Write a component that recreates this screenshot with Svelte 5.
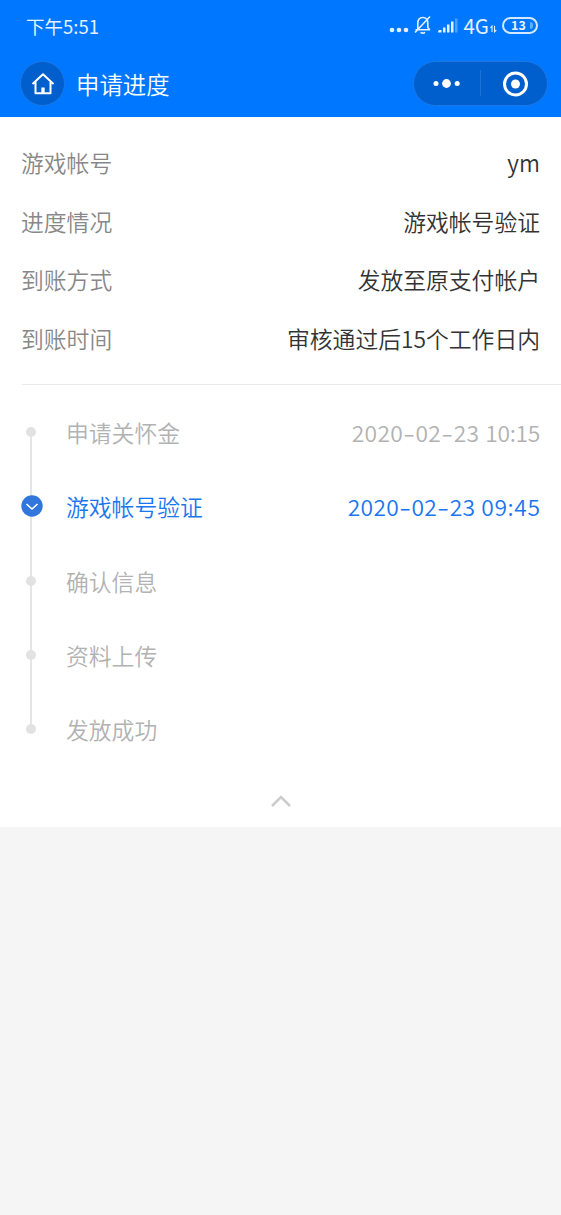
<script>
    const details = [
        { label: '游戏帐号', value: 'ym' },
        { label: '进度情况', value: '游戏帐号验证' },
        { label: '到账方式', value: '发放至原支付帐户' },
        { label: '到账时间', value: '审核通过后15个工作日内' }
    ];

    const steps = [
        { name: '申请关怀金', date: '2020-02-23', time: '10:15' },
        { name: '游戏帐号验证', date: '2020-02-23', time: '09:45', current: true },
        { name: '确认信息' },
        { name: '资料上传' },
        { name: '发放成功' }
    ];
</script>

<header>
    <div class="status">
        <span class="clock">下午5:51</span>
        <svg class="signals" width="82" height="30" viewBox="0 0 82 30">
            <g fill="#e6f1ff">
                <circle cx="3" cy="20" r="2.3" />
                <circle cx="10" cy="20" r="2.3" />
                <circle cx="17" cy="20" r="2.3" />
                <path d="M50 20h2.5v2.5h-3.5v-1zM54 17.500h2.500v5h-2.500zM58 14.500h2.500v8h-2.500zM62 11.500h2.500v11h-2.500z" />
                <path opacity=".35" d="M66 8.500h2.500v14h-2.500z" />
            </g>
            <g fill="none" stroke="#e6f1ff" stroke-width="1.6">
                <path d="M26.500 19.800h14.500M28.800 19V13.500c0-4 2-6 5-6s5 2 5 6v4l2 2.300M26 22.500L41 6.500M31.500 22.300q2.300 1.700 4.600 0" />
            </g>
        </svg>
        <span class="network">4G</span>
        <svg class="data" width="7" height="8" viewBox="0 0 7 8">
            <path d="M2 7V1L.5 3M4.500 .8v6L6.300 5" fill="none" stroke="#e6f1ff" stroke-width="1.1" />
        </svg>
        <span class="battery">13<i></i></span>
    </div>
    <div class="bar">
        <span class="home">
            <svg width="24" height="24" viewBox="0 0 24 24">
                <path d="M1.500 12L12 2.300 22.500 12M4.500 10v11.200h15V10M12 21v-5" fill="none" stroke="#fff" stroke-width="2" stroke-linejoin="round" />
                <path d="M10.300 15.500h3.400v5h-3.400z" fill="#fff" />
            </svg>
        </span>
        <h1>申请进度</h1>
        <div class="capsule">
            <svg width="133" height="43" viewBox="0 0 133 43">
                <g fill="#fff">
                    <circle cx="22" cy="21.5" r="2.5" />
                    <circle cx="32.5" cy="21.5" r="4.4" />
                    <circle cx="43.2" cy="21.5" r="2.5" />
                    <circle cx="101.5" cy="22" r="4.5" />
                </g>
                <circle cx="101.5" cy="22" r="11" fill="none" stroke="#fff" stroke-width="3" />
                <path d="M66.500 8v26" stroke="#1b72dc" />
            </svg>
        </div>
    </div>
</header>

<main>
    <dl>
        {#each details as item}
            <div class="row">
                <dt>{item.label}</dt>
                <dd>{item.value}</dd>
            </div>
        {/each}
    </dl>

    <ul>
        {#each steps as step}
            <li class:current={step.current}>
                <span class="mark">
                    {#if step.current}
                        <svg width="22" height="22" viewBox="0 0 22 22">
                            <circle cx="11" cy="11" r="10.7" fill="#3076dc" />
                            <path d="M5.500 9l5.500 5 5.500-5" fill="none" stroke="#fff" stroke-width="1.6" />
                        </svg>
                    {:else}
                        <i class="dot"></i>
                    {/if}
                </span>
                <span class="name">{step.name}</span>
                {#if step.date}
                    <span class="date">
                        {#each step.date.split('-') as part, i}{#if i > 0}<span class="dash">-</span>{/if}{part}{/each}
                    </span>
                    <span class="time">{step.time}</span>
                {/if}
            </li>
        {/each}
    </ul>

    <div class="fold">
        <svg width="22" height="14" viewBox="0 0 22 14">
            <path d="M2 12l9-9 9 9" fill="none" stroke="#ccc" stroke-width="2.6" />
        </svg>
    </div>
</main>

<style>
    :global(body) {
        background: #f5f5f5;
        font-family: "Noto Sans CJK SC", sans-serif;
        font-weight: 350;
        font-size: 22.8px;
    }

    header {
        height: 117px;
        background: #0077ff;
        color: #e6f1ff;
    }

    .status {
        display: flex;
        align-items: center;
        height: 50px;
        padding: 0 23px 0 26px;
        line-height: 50px;
    }

    .clock {
        margin: 1px auto 0 0;
        font-size: 18.5px;
        font-weight: 400;
    }

    .signals {
        margin: 0 -8px 1px 0;
    }

    .network {
        font-size: 20.5px;
        font-weight: 400;
    }

    .data {
        margin: 7px 5px 0 1px;
    }

    .battery {
        display: flex;
        align-items: center;
        justify-content: center;
        box-sizing: border-box;
        width: 36px;
        height: 17px;
        border: 2px solid #d5e8ff;
        border-radius: 9px;
        font-size: 12.5px;
        font-weight: 700;
        line-height: 12px;
    }

    .battery i {
        width: 3px;
        height: 7px;
        margin: 0 -4px 0 4px;
        border-radius: 0 3px 3px 0;
        background: #66adff;
    }

    .bar {
        display: flex;
        align-items: center;
        height: 67px;
        padding: 0 13px 0 20px;
    }

    .home {
        display: flex;
        align-items: center;
        justify-content: center;
        box-sizing: border-box;
        width: 45px;
        height: 45px;
        border: 1px solid #1b78e5;
        border-radius: 50%;
        background: #005fcc;
    }

    h1 {
        margin: 1px auto 0 11px;
        color: #fff;
        font-size: 23.4px;
        font-weight: 350;
        line-height: 45px;
    }

    .capsule {
        display: flex;
        border: 1px solid #1b78e5;
        border-radius: 23px;
        background: #005fcc;
    }

    main {
        height: 709.5px;
        background: #fff;
    }

    dl {
        margin: 0 0 0 22px;
        padding: 17px 21px 16px 0;
        border-bottom: 1.5px solid #eaeaea;
    }

    .row {
        display: flex;
        justify-content: space-between;
        height: 58.5px;
        line-height: 58.5px;
    }

    dt {
        margin-left: -1px;
        color: #888;
    }

    dd {
        margin: 0;
        color: #333;
    }

    ul {
        margin: 0;
        padding: 11px 21px 0 22px;
        list-style: none;
    }

    li {
        display: flex;
        height: 74.3px;
        color: #b2b2b2;
        line-height: 74.3px;
    }

    .mark {
        display: flex;
        flex-direction: column;
        align-items: center;
        justify-content: center;
        width: 18px;
        margin: -1px 26px 1px 0;
        background: linear-gradient(#e5e5e5, #e5e5e5) 8px 0 / 2px 100% no-repeat;
    }

    .mark svg {
        flex: none;
        margin-right: -2px;
    }

    li:first-child .mark {
        background-position: 8px 37px;
    }

    li:last-child .mark {
        background-size: 2px 37px;
    }

    .dot {
        width: 10px;
        height: 10px;
        border-radius: 50%;
        background: #e2e2e2;
    }

    .date {
        margin-left: auto;
        letter-spacing: 0.3px;
    }

    .time {
        margin-left: 6px;
        letter-spacing: -0.3px;
    }

    .dash {
        display: inline-block;
        width: 12.5px;
        text-align: center;
        transform: scaleX(1.5);
    }

    .current {
        color: #1a76ef;
    }

    .current .time {
        margin-right: -0.5px;
        letter-spacing: 0.6px;
    }

    .fold {
        display: flex;
        justify-content: center;
        padding-top: 27px;
    }
</style>
